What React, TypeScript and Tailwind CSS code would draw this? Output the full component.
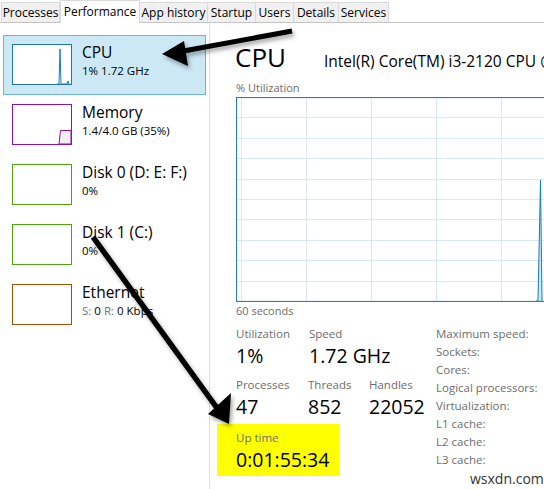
import React from "react";

const FONT = { fontFamily: '"Open Sans", "Noto Sans", Arial, sans-serif' };

function Tab({ label, w, active }: { label: string; w: string; active?: boolean }) {
  if (active) {
    return (
      <div
        className={`${w} h-[23px] -mb-[1px] bg-white border border-b-0 border-[#d9d9d9] flex items-start justify-center pt-[2px] text-[12px] text-black relative z-10`}
      >
        {label}
      </div>
    );
  }
  return (
    <div
      className={`${w} h-[20px] bg-[#f0f0f0] border border-b-0 border-[#d9d9d9] -ml-[1px] first:ml-0 flex items-center justify-center text-[12px] text-black`}
    >
      {label}
    </div>
  );
}

function Thumb({ color, children }: { color: string; children?: React.ReactNode }) {
  return (
    <div className="w-[60px] h-[41px] bg-white relative shrink-0" style={{ border: `1px solid ${color}` }}>
      {children}
    </div>
  );
}

function SideItem({
  title,
  sub,
  thumb,
  selected,
}: {
  title: string;
  sub: React.ReactNode;
  thumb: React.ReactNode;
  selected?: boolean;
}) {
  return (
    <div
      className={`ml-[3px] w-[203px] h-[60px] flex items-start pt-[8px] pl-[8px] gap-[10px] border ${
        selected ? "bg-[#cce8f5] border-[#6db3de]" : "border-transparent"
      }`}
    >
      {thumb}
      <div className="flex flex-col -mt-[2px]">
        <div className="text-[15.5px] leading-[21px] text-black whitespace-nowrap">{title}</div>
        <div className="text-[11.5px] leading-[16px] text-black whitespace-nowrap">{sub}</div>
      </div>
    </div>
  );
}

function Chart() {
  const vs = [5, 70, 135, 200, 265];
  const hs = [1, 2, 3, 4, 5, 6, 7, 8, 9].map((i) => i * 20.4);
  return (
    <svg width="320" height="205" className="block">
      {vs.map((x) => (
        <line key={"v" + x} x1={x + 0.5} y1={0} x2={x + 0.5} y2={205} stroke="#d9e9f3" strokeWidth="1" />
      ))}
      {hs.map((y) => (
        <line key={"h" + y} x1={0} y1={Math.round(y) + 0.5} x2={320} y2={Math.round(y) + 0.5} stroke="#d9e9f3" strokeWidth="1" />
      ))}
      <polygon points="302,204 304.5,83 306,204" fill="#d4e8f5" />
      <polyline points="300,204 302,204 304.5,83 306,204" fill="none" stroke="#117dbb" strokeWidth="1" />
      <rect x="0.5" y="0.5" width="330" height="204" fill="none" stroke="#2b7cb1" strokeWidth="1.2" />
    </svg>
  );
}

function Stat({ label, value, w }: { label: string; value: string; w?: string }) {
  return (
    <div className={w}>
      <div className="text-[11.5px] leading-[16px] text-[#6d6d6d]">{label}</div>
      <div className="text-[19.5px] leading-[28px] text-black whitespace-nowrap">{value}</div>
    </div>
  );
}

export default function App() {
  return (
    <div className="w-[544px] h-[489px] bg-white relative overflow-hidden" style={FONT}>
      {/* Tabs */}
      <div className="h-[23px] flex items-end pl-[1px] border-b border-[#c4c4c4]">
        <Tab label="Processes" w="w-[59px]" />
        <Tab label="Performance" w="w-[80px]" active />
        <Tab label="App history" w="w-[69px]" />
        <Tab label="Startup" w="w-[49px]" />
        <Tab label="Users" w="w-[39px]" />
        <Tab label="Details" w="w-[46px]" />
        <Tab label="Services" w="w-[51px]" />
      </div>

      <div className="flex h-[466px]">
        {/* Sidebar */}
        <div className="w-[210px] shrink-0 border-r border-[#dedede] pt-[12px]">
          <SideItem
            selected
            title="CPU"
            sub="1% 1.72 GHz"
            thumb={
              <Thumb color="#1f77b0">
                <svg width="58" height="39" className="absolute left-0 top-0">
                  <polyline points="44,39 46,39 47,4 48,39 54,39 55,36 56,39" fill="none" stroke="#117dbb" strokeWidth="1" />
                </svg>
              </Thumb>
            }
          />
          <SideItem
            title="Memory"
            sub="1.4/4.0 GB (35%)"
            thumb={
              <Thumb color="#8b12ae">
                <svg width="58" height="39" className="absolute left-0 top-0">
                  <polygon points="46,39 47.5,25.5 58,25.5 58,39" fill="#f2eef3" stroke="#8b12ae" strokeWidth="1" />
                </svg>
              </Thumb>
            }
          />
          <SideItem title="Disk 0 (D: E: F:)" sub="0%" thumb={<Thumb color="#4da60c" />} />
          <SideItem title="Disk 1 (C:)" sub="0%" thumb={<Thumb color="#4da60c" />} />
          <SideItem
            title="Ethernet"
            sub={
              <span>
                <span className="text-[#707070]">S:</span> 0 <span className="text-[#707070]">R:</span> 0 Kbps
              </span>
            }
            thumb={<Thumb color="#a74f01" />}
          />
        </div>

        {/* Main panel */}
        <div className="flex-1 pl-[26px] pt-[17px] min-w-0">
          <div className="flex items-baseline whitespace-nowrap">
            <div className="text-[26px] leading-[34px] text-black w-[89px] shrink-0 -ml-[1px]">CPU</div>
            <div className="text-[15.5px] leading-[20px] text-black shrink-0">Intel(R) Core(TM) i3-2120 CPU @ 3.30GHz</div>
          </div>
          <div className="text-[11px] leading-[15px] text-[#6d6d6d] mt-[6px]">% Utilization</div>
          <div className="mt-[2px]">
            <Chart />
          </div>
          <div className="text-[11px] leading-[15px] text-[#6d6d6d] mt-[1px]">60 seconds</div>

          <div className="flex mt-[8px]">
            <div className="w-[200px] shrink-0">
              <div className="flex">
                <Stat w="w-[73px]" label="Utilization" value="1%" />
                <Stat label="Speed" value="1.72 GHz" />
              </div>
              <div className="flex mt-[7px]">
                <Stat w="w-[72px]" label="Processes" value="47" />
                <Stat w="w-[61px]" label="Threads" value="852" />
                <Stat label="Handles" value="22052" />
              </div>
              <div className="-ml-[19px] w-[123px] h-[52px] bg-[#ffff00] pl-[19px] pt-[6px] mt-[3px]">
                <Stat label="Up time" value="0:01:55:34" />
              </div>
            </div>
            <div className="flex flex-col text-[11.5px] leading-[18px] text-[#6d6d6d] -mt-[1px] whitespace-nowrap">
              <div>Maximum speed:</div>
              <div>Sockets:</div>
              <div>Cores:</div>
              <div>Logical processors:</div>
              <div>Virtualization:</div>
              <div>L1 cache:</div>
              <div>L2 cache:</div>
              <div>L3 cache:</div>
            </div>
          </div>
        </div>
      </div>

      {/* Watermark */}
      <div className="absolute left-[470px] top-[471px] text-[14px] leading-[16px] text-[#333]">wsxdn.com</div>

      {/* Annotation arrows */}
      <svg width="544" height="489" className="absolute left-0 top-0 pointer-events-none">
        <defs>
          <filter id="sh" x="-20%" y="-20%" width="140%" height="140%">
            <feDropShadow dx="2" dy="3" stdDeviation="2" floodColor="#000" floodOpacity="0.35" />
          </filter>
        </defs>
        <g filter="url(#sh)">
          <line x1="292" y1="31" x2="178" y2="52" stroke="#000" strokeWidth="5" />
          <polygon points="162,54 184,41 188,66" fill="#000" />
          <line x1="93" y1="237" x2="217" y2="408" stroke="#000" strokeWidth="5.5" />
          <polygon points="229,424 208,414 231,393" fill="#000" />
        </g>
      </svg>
    </div>
  );
}
